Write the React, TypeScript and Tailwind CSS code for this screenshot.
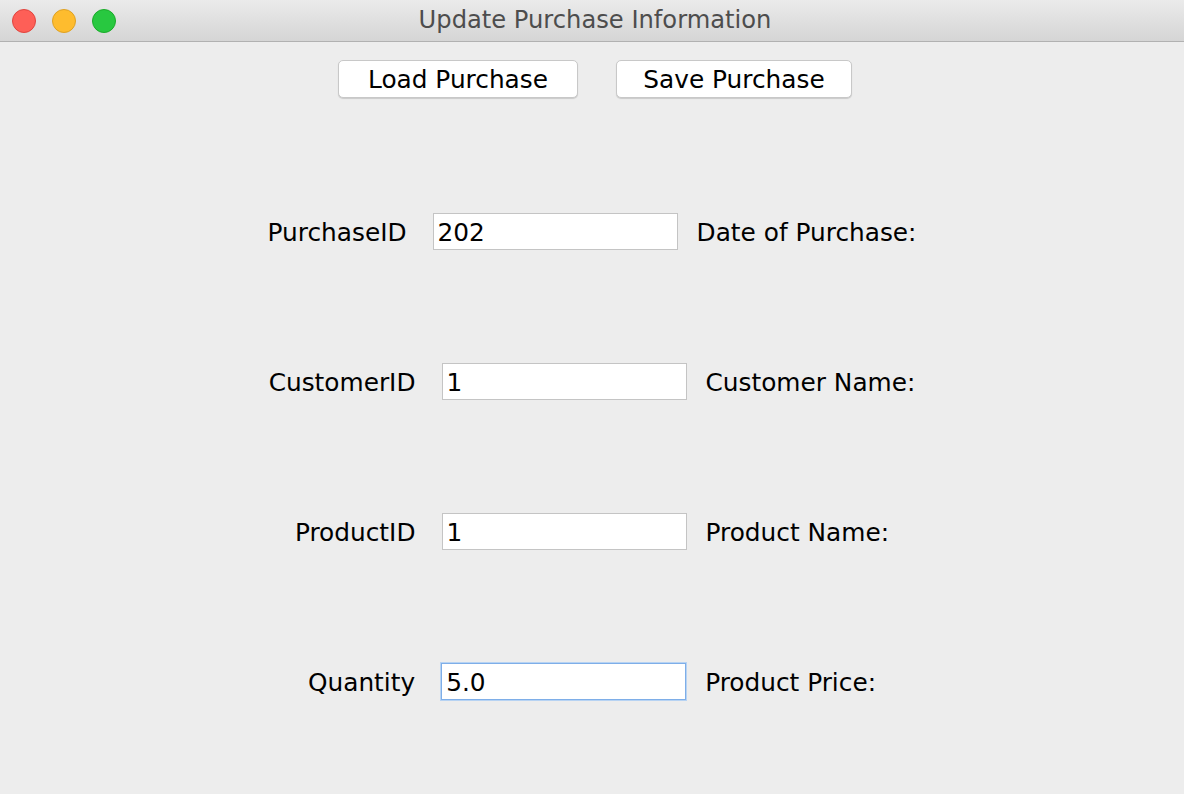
const font = { fontFamily: '"Lucida Grande", "DejaVu Sans", sans-serif' }

function Row({ label, value, after, focused }: { label: string; value: string; after: string; focused?: boolean }) {
  return (
    <div className="flex items-center justify-center h-[150px]">
      <span className="text-[24.8px] text-black pt-[4px]">{label}</span>
      <div
        className={
          'ml-[26px] w-[245px] h-[37px] bg-white flex items-center px-[4px] pt-[3px] text-[24.8px] text-black ' +
          (focused ? 'border border-[#7eaee8] shadow-[0_0_0_1px_#b7d3f3]' : 'border border-[#c4c4c4]')
        }
      >
        {value}
      </div>
      <span className="ml-[19px] text-[24.8px] text-black pt-[4px]">{after}</span>
    </div>
  )
}

export default function App() {
  return (
    <div className="w-[1184px] h-[794px] bg-[#ededed] flex flex-col overflow-hidden" style={font}>
      {/* title bar */}
      <div className="h-[42px] shrink-0 flex items-center relative bg-gradient-to-b from-[#ebebeb] to-[#d5d5d5] border-b border-[#b1b1b1]">
        <div className="flex items-center gap-[16px] pl-[12px]">
          <span className="w-[24px] h-[24px] rounded-full bg-[#fe5f57] border border-[#e0443e]" />
          <span className="w-[24px] h-[24px] rounded-full bg-[#febc2e] border border-[#dea123]" />
          <span className="w-[24px] h-[24px] rounded-full bg-[#28c840] border border-[#1aab29]" />
        </div>
        <div className="absolute inset-0 flex items-center justify-center text-[24.2px] text-[#4d4d4d] pl-[6px]">
          Update Purchase Information
        </div>
      </div>

      {/* buttons */}
      <div className="flex justify-center gap-[38px] pt-[18px] pl-[6px]">
        <button className="w-[240px] h-[38px] bg-white rounded-[5px] border border-[#c8c8c8] shadow-[0_1px_1px_rgba(0,0,0,0.15)] text-[24.8px] text-black">
          Load Purchase
        </button>
        <button className="w-[236px] h-[38px] bg-white rounded-[5px] border border-[#c8c8c8] shadow-[0_1px_1px_rgba(0,0,0,0.15)] text-[24.8px] text-black">
          Save Purchase
        </button>
      </div>

      {/* fields */}
      <div className="flex flex-col pt-[58px]">
        <Row label="PurchaseID" value="202" after="Date of Purchase:" />
        <Row label="CustomerID" value="1" after="Customer Name:" />
        <Row label="ProductID" value="1" after="Product Name:" />
        <Row label="Quantity" value="5.0" after="Product Price:" focused />
      </div>
    </div>
  )
}
